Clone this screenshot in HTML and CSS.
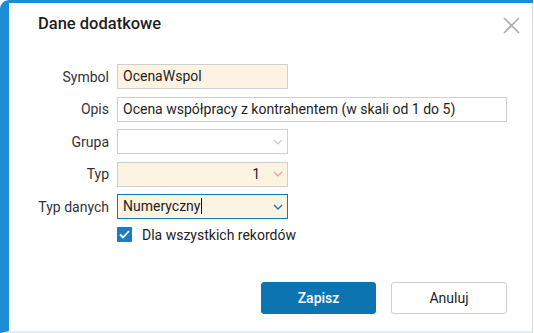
FILE: index.html
```html
<!DOCTYPE html>
<html lang="pl">
<head>
    <meta charset="UTF-8">
    <title>Dane dodatkowe</title>
    <link rel="stylesheet" href="styles.css">
</head>
<body>
    <div class="window">
        <div class="dialog">
            <div class="dialog-head">
                <h1>Dane dodatkowe</h1>
                <span class="close">
                    <svg width="17" height="17" viewBox="0 0 17 17"><path d="M1 1L16 16M16 1L1 16" stroke="#acacac" stroke-width="1.6" fill="none"/></svg>
                </span>
            </div>
            <div class="fields">
                <label>Symbol</label>
                <div class="input short filled">OcenaWspol</div>

                <label>Opis</label>
                <div class="input wide">Ocena współpracy z kontrahentem (w skali od 1 do 5)</div>

                <label>Grupa</label>
                <div class="input short select">
                    <span></span>
                    <svg class="chev" width="10" height="6" viewBox="0 0 10 6"><path d="M1 1L5 5L9 1" stroke="#c8c8c8" stroke-width="1.1" fill="none"/></svg>
                </div>

                <label>Typ</label>
                <div class="input short filled select">
                    <span class="num">1</span>
                    <svg class="chev" width="10" height="6" viewBox="0 0 10 6"><path d="M1 1L5 5L9 1" stroke="#e3a08c" stroke-width="1.1" fill="none"/></svg>
                </div>

                <label>Typ danych</label>
                <div class="input short filled select focus">
                    <span><span class="caret">Numeryczny</span></span>
                    <svg class="chev" width="10" height="6" viewBox="0 0 10 6"><path d="M1 1L5 5L9 1" stroke="#1478bb" stroke-width="1.4" fill="none"/></svg>
                </div>

                <span></span>
                <div class="check-row">
                    <span class="checkbox">
                        <svg width="15" height="15" viewBox="0 0 15 15"><path d="M3 7.5L6 10.5L12 4" stroke="#fff" stroke-width="1.8" fill="none"/></svg>
                    </span>
                    Dla wszystkich rekordów
                </div>
            </div>
            <div class="actions">
                <button class="btn primary">Zapisz</button>
                <button class="btn">Anuluj</button>
            </div>
        </div>
    </div>
</body>
</html>
```

FILE: styles.css
```css
body { margin: 0; background-color: #fff; font-family: Roboto, "Liberation Sans", Arial, sans-serif; color: #222; }
.window { width: 524px; height: 328px; border-top: 3px solid #1b8cd6; border-left: 9px solid #1b8cd6; border-bottom: 2px solid #e2edf5; border-top-left-radius: 9px; }
.dialog { height: 100%; background-color: #fff; border-top-left-radius: 5px; border-right: 1px solid #dadada; }
.dialog-head { display: flex; justify-content: space-between; align-items: flex-start; padding: 11px 12px 0 29px; height: 23px; }
.dialog-head h1 { margin: 0; font-size: 16.5px; font-weight: 500; line-height: 20px; color: #1e1e1e; }
.close { padding-top: 3px; }
.fields { display: grid; grid-template-columns: 100px 390px; column-gap: 8px; row-gap: 7.5px; align-items: center; margin-top: 27px; }
.fields label { text-align: right; font-size: 14px; color: #333; }
.input { box-sizing: border-box; height: 25px; border: 1px solid #cfcfcf; background-color: #fff; font-size: 14px; line-height: 23px; padding: 0 5px; color: #1e1e1e; white-space: nowrap; }
.input.short { width: 171px; }
.input.wide { width: 390px; }
.input.filled { background-color: #fdf3e3; }
.input.select { display: flex; align-items: center; justify-content: space-between; padding-right: 4px; }
.input.focus { border-color: #1478bb; }
.input .num { flex: 1; text-align: right; padding-right: 13px; }
.caret { border-right: 1px solid #111; padding-right: 1px; }
.check-row { display: flex; align-items: center; gap: 10px; font-size: 14px; color: #222; margin-top: 0; }
.checkbox { display: inline-flex; width: 15px; height: 15px; background-color: #1a7cc2; border-radius: 1px; }
.actions { display: flex; gap: 15px; margin: 39px 0 0 252px; }
.btn { width: 116px; height: 32px; border: 1px solid #cfcfcf; border-radius: 3px; background-color: #fff; font-family: Roboto, "Liberation Sans", Arial, sans-serif; font-size: 14px; color: #222; }
.btn.primary { width: 115px; border-color: #0c74b1; background-color: #0c74b1; color: #fff; font-weight: 500; }
```
